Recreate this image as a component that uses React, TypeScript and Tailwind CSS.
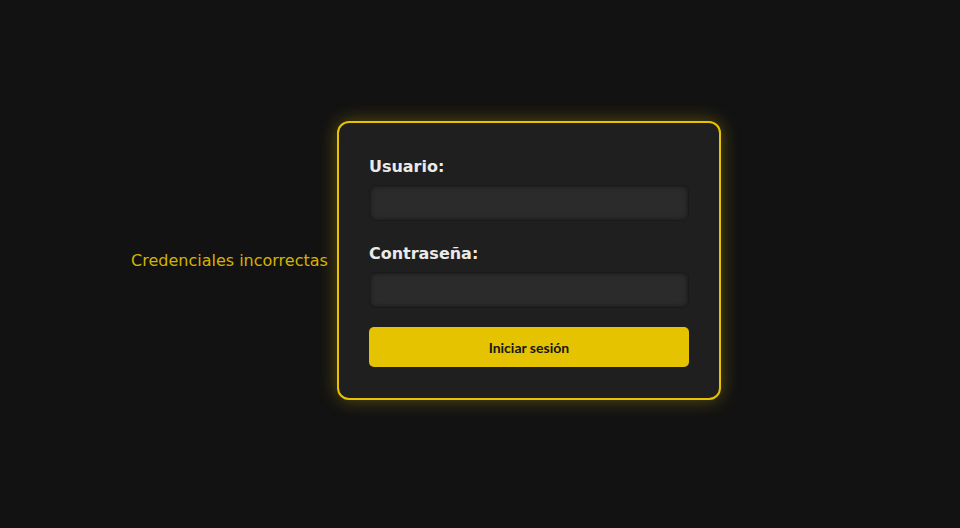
export default function App() {
	return (
		<div className="min-h-screen w-full bg-[#121212] pt-[121px] pl-[131px] font-['DejaVu_Sans',sans-serif]">
			<div className="flex items-center gap-[9px]">
				<p className="text-[#d4b300] text-base">Credenciales incorrectas</p>
				<form
					className="w-[384px] bg-[#1f1f1f] border-2 border-[#e6c200] rounded-xl px-[30px] pt-[32px] pb-[31px] shadow-[0_0_18px_rgba(230,194,0,0.35)] flex flex-col"
					onSubmit={(e) => e.preventDefault()}
				>
					<label className="text-[#eaeaea] font-bold text-base leading-6 mb-[6px]">Usuario:</label>
					<input
						type="text"
						className="h-9 w-full rounded-md bg-[#2b2b2b] border border-[#1a1a1a] shadow-[inset_0_0_5px_rgba(0,0,0,0.55)] outline-none"
					/>
					<label className="text-[#eaeaea] font-bold text-base leading-6 mt-[21px] mb-[6px]">Contraseña:</label>
					<input
						type="password"
						className="h-9 w-full rounded-md bg-[#2b2b2b] border border-[#1a1a1a] shadow-[inset_0_0_5px_rgba(0,0,0,0.55)] outline-none"
					/>
					<button
						type="submit"
						className="mt-[19px] h-10 w-full rounded-[5px] bg-[#e6c300] text-[#151515] font-bold text-[14px] font-['Lato',sans-serif]"
					>
						Iniciar sesión
					</button>
				</form>
			</div>
		</div>
	);
}
